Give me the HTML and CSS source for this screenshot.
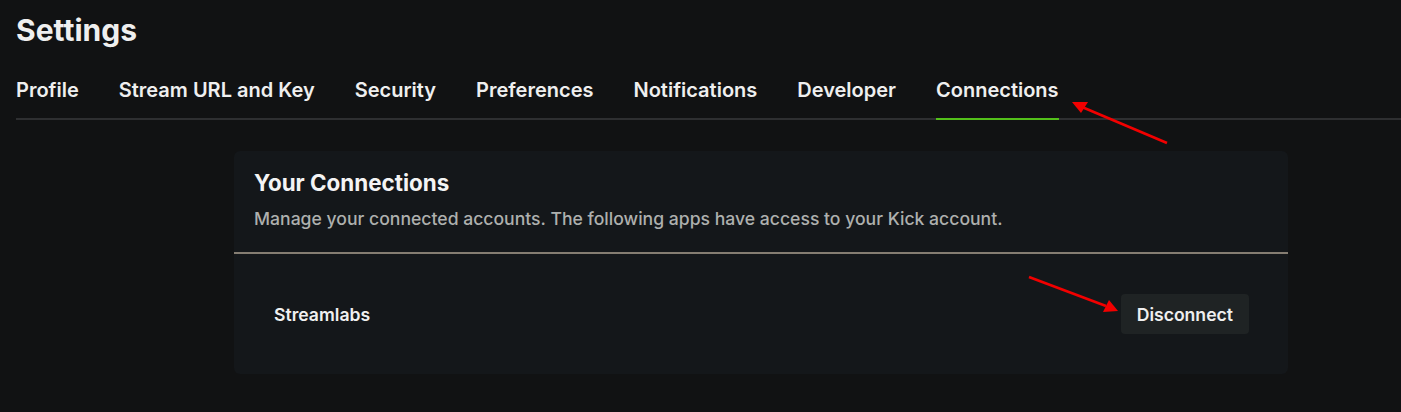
FILE: index.html
```html
<!DOCTYPE html>
<html>
<head>
<meta charset="utf-8">
<link rel="stylesheet" href="styles.css">
</head>
<body>
<div class="page">
  <h1 class="title">Settings</h1>
  <nav class="tabs">
    <a class="tab">Profile</a>
    <a class="tab">Stream URL and Key</a>
    <a class="tab">Security</a>
    <a class="tab">Preferences</a>
    <a class="tab">Notifications</a>
    <a class="tab">Developer</a>
    <a class="tab active">Connections</a>
  </nav>
  <section class="card">
    <div class="card-head">
      <h2 class="card-title">Your Connections</h2>
      <p class="card-sub">Manage your connected accounts. The following apps have access to your Kick account.</p>
    </div>
    <div class="row">
      <span class="app">Streamlabs</span>
      <button class="btn">Disconnect</button>
    </div>
  </section>
</div>
<svg class="arrows" width="1401" height="412" viewBox="0 0 1401 412">
  <line x1="1167" y1="143" x2="1082" y2="107" stroke="#f20000" stroke-width="2.6"/>
  <path d="M1072,102 L1088,102 L1081,113 z" fill="#f20000"/>
  <line x1="1029" y1="277" x2="1106" y2="306" stroke="#f20000" stroke-width="2.6"/>
  <path d="M1118,311 L1103,312 L1109,300 z" fill="#f20000"/>
</svg>
</body>
</html>
```
FILE: styles.css
```css
html, body {
  margin: 0;
  padding: 0;
  background: #111213;
  width: 1401px;
  height: 412px;
  overflow: hidden;
  font-family: Inter, "Noto Sans", sans-serif;
  color: #eeeeee;
}
.page {
  padding: 11px 0 0 16px;
}
.title {
  margin: 0;
  font-size: 30px;
  font-weight: 700;
  line-height: 38px;
  color: #efefef;
}
.tabs {
  display: flex;
  gap: 40px;
  margin-top: 29px;
  border-bottom: 2px solid #2e2f31;
}
.tab {
  font-size: 20px;
  font-weight: 600;
  line-height: 24px;
  padding-bottom: 16px;
  color: #efefef;
  border-bottom: 2px solid transparent;
  margin-bottom: -2px;
}
.tab.active {
  border-bottom-color: #53c01a;
}
.card {
  margin: 31px 0 0 218px;
  width: 1054px;
  background: #14171a;
  border-radius: 6px;
}
.card-head {
  padding: 18px 20px 21px;
  border-bottom: 2px solid #857d72;
}
.card-title {
  margin: 0;
  font-size: 22.4px;
  font-weight: 700;
  line-height: 28px;
  color: #f4f4f4;
}
.card-sub {
  margin: 10px 0 0;
  font-size: 17.6px;
  font-weight: 500;
  line-height: 24px;
  color: #aeb0ae;
}
.row {
  display: flex;
  align-items: center;
  justify-content: space-between;
  padding: 40px 39px 40px 40px;
}
.app {
  font-size: 17.6px;
  font-weight: 600;
  color: #f0f0f0;
}
.btn {
  font-family: inherit;
  font-size: 17.6px;
  font-weight: 600;
  color: #efefef;
  background: #1f2324;
  border: none;
  border-radius: 4px;
  height: 40px;
  padding: 0 16px;
}
.arrows {
  position: absolute;
  left: 0;
  top: 0;
  pointer-events: none;
}
```
